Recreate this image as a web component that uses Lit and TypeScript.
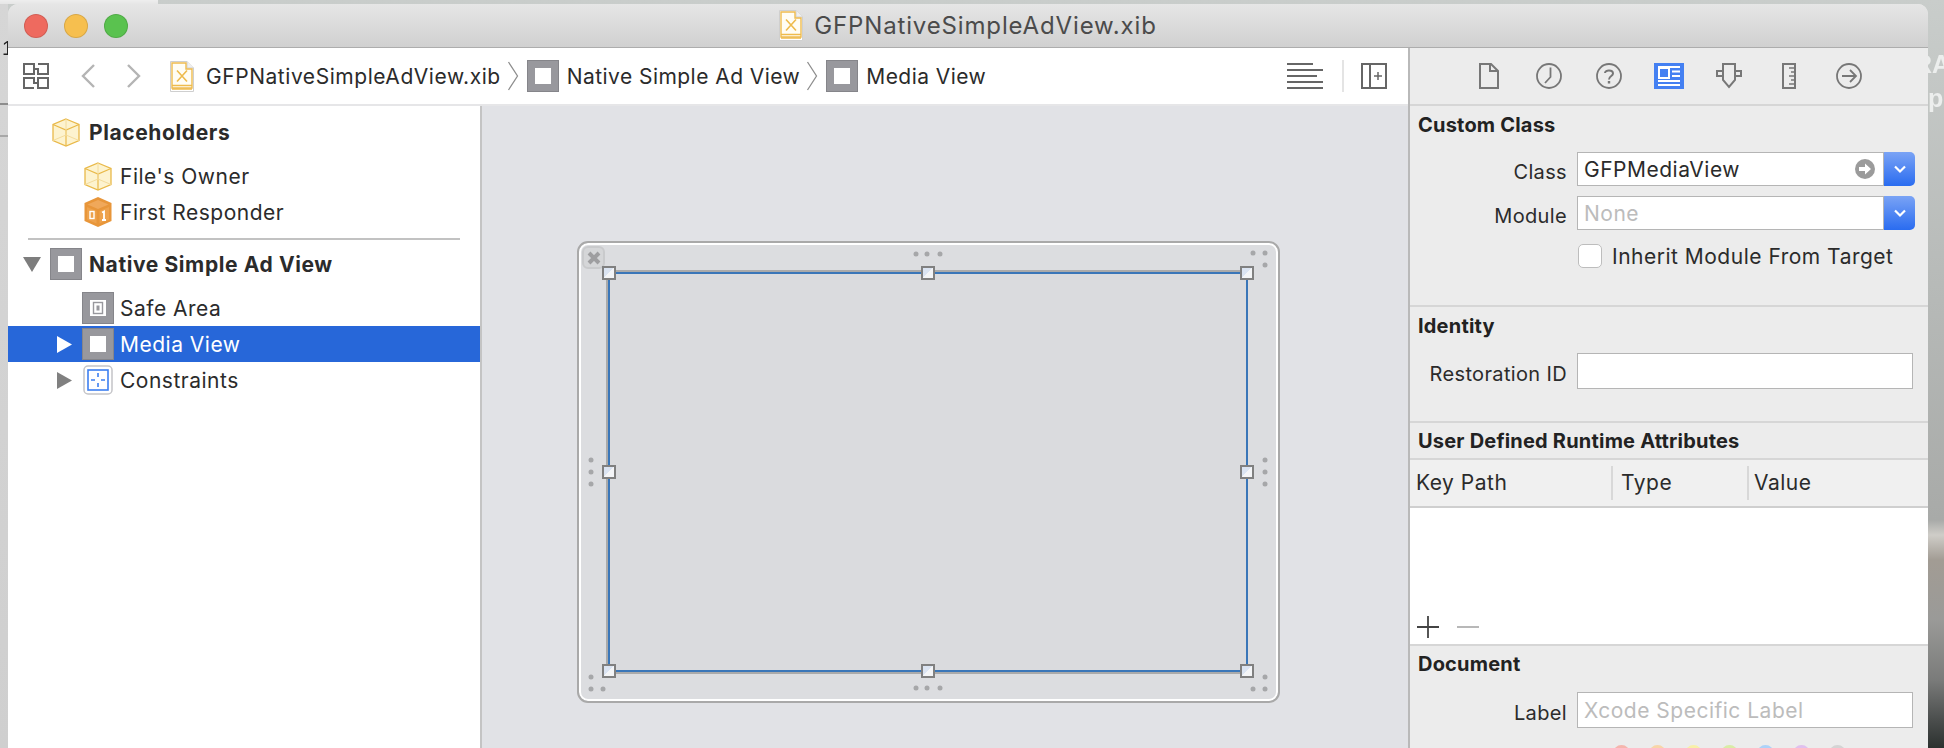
import { LitElement, html, svg, css } from 'lit';
import { customElement } from 'lit/decorators.js';

// small icon helpers, all drawn at the size seen in the screenshot
const cube = (w = 28, h = 29) => svg`
  <svg width=${w} height=${h} viewBox="0 0 28 29">
    <path d="M14 1 27 6.500V22.500L14 28 1 22.500V6.500Z" fill="#fdf3cf" stroke="#e9b949" stroke-width="1.300"/>
    <path d="M1 6.500 14 12 27 6.500M14 12V28" fill="none" stroke="#e9b949" stroke-width="1.200"/>
    <path d="M14 1V17M1 22.500 14 17 27 22.500" fill="none" stroke="#f4dc9c" stroke-width="1"/>
  </svg>`;

const responder = () => svg`
  <svg width="28" height="32" viewBox="0 0 28 32">
    <path d="M14 1 27.500 7V25L14 31 .5 25V7Z" fill="#e8963a"/>
    <path d="M14 4 24.500 8.500 14 13 3.500 8.500Z" fill="#f0a85a"/>
    <path d="M3 11 12.500 15V27.500L3 23.500ZM15.500 15 25 11V23.500L15.500 27.500Z" fill="#eea24c"/>
    <rect x="6" y="15.500" width="4" height="7" fill="none" stroke="#fff" stroke-width="1.400"/>
    <path d="M18 16.500 20 15.500V24M18 24H22" fill="none" stroke="#fff" stroke-width="1.800"/>
  </svg>`;

const viewBox = (inner: 'plain' | 'safe' = 'plain') => svg`
  <svg width="32" height="32" viewBox="0 0 32 32">
    <rect width="32" height="32" fill="#98989d"/>
    <rect x=".5" y=".5" width="31" height="31" fill="none" stroke="#85858a"/>
    <rect x="8" y="8" width="16" height="16" fill="#fff"/>
    ${inner === 'safe'
      ? svg`<rect x="11.500" y="10.500" width="9" height="11" fill="#fff" stroke="#98989d" stroke-width="1.400"/>
            <rect x="14.500" y="13.500" width="3" height="5" fill="#98989d"/>`
      : ''}
  </svg>`;

const constraints = () => svg`
  <svg width="30" height="30" viewBox="0 0 30 30">
    <rect x="1" y="1" width="28" height="28" rx="4" fill="#fff" stroke="#c4c4c8" stroke-width="1.500"/>
    <rect x="5" y="5" width="20" height="20" fill="#fff" stroke="#3d7ff0" stroke-width="1.600"/>
    <path d="M15 8V12M15 18V22M8 15H12M18 15H22" stroke="#3d7ff0" stroke-width="1.600"/>
  </svg>`;

const xib = (w = 24, h = 31) => svg`
  <svg width=${w} height=${h} viewBox="0 0 24 31">
    <path d="M.5.5H17L23.500 7V30.500H.5Z" fill="#fff" stroke="#cfcfcf"/>
    <path d="M17 .5V7H23.500" fill="#efefef" stroke="#cfcfcf"/>
    <path d="M2 2H16V8H22V27H2Z" fill="#fffdf4" stroke="#eebb4d" stroke-width="1.400"/>
    <path d="M2 24.500H22M2 28H22" stroke="#eebb4d" stroke-width="1.300"/>
    <path d="M7 9.500 17 20.500M17 9.500 7 20.500" stroke="#eebb4d" stroke-width="1.600"/>
  </svg>`;

const grid = () => svg`
  <svg width="26" height="26" viewBox="0 0 26 26" fill="none" stroke="#666" stroke-width="2">
    <rect x="1" y="1" width="10" height="10"/><path d="M15 1H25V11H15V6H11"/>
    <path d="M11 25H1V15H11V20H15"/><rect x="15" y="15" width="10" height="10"/>
  </svg>`;

const crumbSep = () => svg`
  <svg width="12" height="30" viewBox="0 0 12 30"><path d="M1.500 1 10.500 15 1.500 29" fill="none" stroke="#8e8e8e" stroke-width="1.300"/></svg>`;

const tri = (dir: 'down' | 'right', color: string) => dir === 'down'
  ? svg`<svg width="18" height="15" viewBox="0 0 18 15"><path d="M0 0H18L9 15Z" fill=${color}/></svg>`
  : svg`<svg width="15" height="17" viewBox="0 0 15 17"><path d="M0 0 15 8.500 0 17Z" fill=${color}/></svg>`;

const chooser = () => html`<span class="stepper"><svg width="14" height="9" viewBox="0 0 14 9"><path d="M2 1.500 7 6.500 12 1.500" fill="none" stroke="#fff" stroke-width="2.200"/></svg></span>`;

const inspectorIcons = [
  svg`<svg width="20" height="26" viewBox="0 0 20 26" fill="none" stroke="#777" stroke-width="2"><path d="M1 1H12L19 8V25H1Z"/><path d="M11 1V8H19"/></svg>`,
  svg`<svg width="26" height="26" viewBox="0 0 26 26" fill="none" stroke="#777" stroke-width="1.800"><circle cx="13" cy="13" r="12"/><path d="M14.500 4.500V14L9 20"/></svg>`,
  svg`<svg width="26" height="26" viewBox="0 0 26 26" fill="none" stroke="#777" stroke-width="1.800"><circle cx="13" cy="13" r="12"/><path d="M9 10C9 6.500 17 6.500 17 10.500 17 13 13 13 13 16.500" stroke-width="2"/><path d="M13 18V20.500" stroke-width="2.400"/></svg>`,
  svg`<svg width="30" height="26" viewBox="0 0 30 26"><rect width="30" height="26" fill="#4480f2"/><path d="M4 4H26M18 8.500H26M18 13H26M4 18H26M4 22H26" stroke="#fff" stroke-width="1.800"/><rect x="5" y="5" width="10" height="10" fill="none" stroke="#fff" stroke-width="2"/></svg>`,
  svg`<svg width="26" height="26" viewBox="0 0 26 26" fill="none" stroke="#777" stroke-width="2"><path d="M7 1H19V17L13 24 7 17Z"/><path d="M7 8H1V13H7M19 8H25V13H19"/></svg>`,
  svg`<svg width="14" height="26" viewBox="0 0 14 26" fill="none" stroke="#777" stroke-width="2"><rect x="1" y="1" width="12" height="24"/><path d="M7 5H13M9 9H13M7 13H13M9 17H13M7 21H13" stroke-width="1.600"/></svg>`,
  svg`<svg width="26" height="26" viewBox="0 0 26 26" fill="none" stroke="#777" stroke-width="1.800"><circle cx="13" cy="13" r="12"/><path d="M6 13H20M14 7 20 13 14 19"/></svg>`,
];

interface TreeRow {
  label: string;
  icon: unknown;
  level: 0 | 1;
  bold?: boolean;
  arrow?: 'down' | 'right';
  selected?: boolean;
}

const firstGroup: TreeRow[] = [
  { label: 'Placeholders', icon: cube(), level: 0, bold: true },
  { label: "File's Owner", icon: cube(), level: 1 },
  { label: 'First Responder', icon: responder(), level: 1 },
];
const secondGroup: TreeRow[] = [
  { label: 'Native Simple Ad View', icon: viewBox(), level: 0, bold: true, arrow: 'down' },
  { label: 'Safe Area', icon: viewBox('safe'), level: 1 },
  { label: 'Media View', icon: viewBox(), level: 1, arrow: 'right', selected: true },
  { label: 'Constraints', icon: constraints(), level: 1, arrow: 'right' },
];

// scene coordinates, relative to the scene's padding box
const hx = [30, 349, 668];
const hy = [30, 229, 428];
const handles = hy.flatMap((y, r) => hx.filter((_, c) => !(r === 1 && c === 1)).map(x => [x, y]));
const dots = [
  [337, 11], [348, 11], [361, 11], [337, 445], [348, 445], [361, 445],
  [12, 217], [12, 229], [12, 241], [686, 217], [686, 229], [686, 241],
  [674, 10], [686, 10], [686, 22], [686, 434], [674, 446], [686, 446],
  [12, 434], [12, 446], [24, 446],
];
const labelColors = ['#f5b5ad', '#f8d5a8', '#f8f0a8', '#d9eca6', '#add2f8', '#e0c0ee', '#d4d4d4'];

@customElement('app-root')
export class AppRoot extends LitElement {
  static styles = css`
    :host {
      display: block;
      width: 1944px;
      height: 748px;
      overflow: hidden;
      font-family: Inter, 'Liberation Sans', sans-serif;
      color: #2b2b2b;
    }
    .desk {
      position: relative;
      width: 1944px;
      height: 748px;
      overflow: hidden;
      padding: 4px 16px 0 8px;
      box-sizing: border-box;
      background:
        linear-gradient(#8d8d8d, #8d8d8d) 0 103px / 8px 2px no-repeat,
        linear-gradient(#a8a8a8, #a8a8a8) 0 135px / 8px 2px no-repeat,
        linear-gradient(#eeeeee, #e6e6e6) 0 0 / 158px 4px no-repeat,
        linear-gradient(#d6d6d6, #cfcfcf) 0 0 / 8px 748px no-repeat,
        linear-gradient(180deg, #c9cdcb 0, #b6b9b7 300px, #a8aaa8 520px, #cfcdc8 535px, #a29c94 560px, #9a9a98 620px, #7a7b7a 680px, #4b4e4d 720px, #2c312f 748px);
    }
    .peek {
      position: absolute;
      left: 1914px;
      font: 700 25px 'Liberation Sans', sans-serif;
      color: #eceeed;
      filter: blur(0.7px);
    }
    .peek.one { top: 50px; }
    .peek.two { top: 84px; }
    .peek.num { left: 2px; top: 37px; color: #222; font-size: 20px; font-weight: 400; }
    .window {
      position: relative;
      width: 1920px;
      height: 744px;
      display: flex;
      flex-direction: column;
      border-radius: 10px 10px 0 0;
      overflow: hidden;
      background: #ececec;
    }
    .titlebar {
      height: 43px;
      flex: none;
      display: flex;
      align-items: center;
      justify-content: center;
      gap: 11px;
      position: relative;
      border-bottom: 1px solid #adadad;
      background: linear-gradient(#e6e6e6, #d0d0d0);
      font-size: 24px;
      letter-spacing: 0.85px;
      color: #4b4b4b;
    }
    .traffic { position: absolute; left: 16px; top: 10px; display: flex; gap: 16px; }
    .light { width: 22px; height: 22px; border-radius: 50%; border: 1px solid rgba(0,0,0,.12); }
    .red { background: #ee6a5f; }
    .yellow { background: #f6bf4f; }
    .green { background: #5ac24f; }
    .main { flex: 1; display: flex; min-height: 0; }
    .left { width: 1400px; flex: none; display: flex; flex-direction: column; }
    .toolbar {
      height: 56px;
      flex: none;
      background: #fff;
      display: flex;
      align-items: center;
      border-bottom: 2px solid #e6e6e8;
      font-size: 21px;
      letter-spacing: 0.55px;
      padding-right: 21px;
    }
    .nav-btns { display: flex; align-items: center; padding-left: 15px; }
    .chev { display: block; }
    .crumbs { display: flex; align-items: center; margin-left: 29px; flex: 1; min-width: 0; }
    .crumbs .gap { margin: 0 8px 0 6px; display: flex; }
    .crumbs .txt { margin-left: 8px; letter-spacing: 0.45px; }
    .crumbs .file { margin-left: 12px; }
    .tools { display: flex; align-items: center; flex: none; }
    .vsep { width: 2px; height: 32px; background: #e4e4e4; margin: 0 17px 0 19px; }
    .content { flex: 1; display: flex; min-height: 0; }
    .tree {
      width: 472px;
      flex: none;
      background: #fff;
      border-right: 2px solid #c4c4c4;
      padding-top: 8px;
      font-size: 21px;
      letter-spacing: 0.5px;
    }
    .row { height: 36px; display: flex; align-items: center; }
    .row.l0 { padding-left: 15px; }
    .row.l1 { padding-left: 49px; }
    .row.spaced { margin-top: 8px; }
    .row.bold { font-weight: 700; letter-spacing: 0.6px; }
    .row.sel { background: #2767d9; color: #fff; }
    .row.l0 .arrow { width: 27px; }
    .row.l1 .arrow { width: 25px; }
    .arrow { display: flex; align-items: center; flex: none; }
    .row .ico { width: 32px; height: 32px; display: flex; align-items: center; justify-content: center; flex: none; margin-right: 7px; }
    .row.l1 .ico { margin-right: 6px; }
    .tree hr { border: 0; height: 2px; background: #c2c2c2; margin: 8px 20px 6px 20px; }
    .canvas { flex: 1; position: relative; background: #e1e2e6; }
    .scene {
      position: absolute;
      left: 95px;
      top: 135px;
      width: 699px;
      height: 458px;
      border: 2px solid #a9a9a9;
      border-radius: 11px;
      background: #dcdde0;
      box-shadow: inset 0 0 0 2px #fff;
    }
    .frame {
      position: absolute;
      left: 29px;
      top: 29px;
      width: 636px;
      height: 396px;
      border: 2px solid #3a76b8;
      background: #dadbde;
      box-shadow: 0 -2px 0 #aaa, -2px 0 0 #aaa, 0 2px 0 #aaa;
    }
    .handle {
      position: absolute;
      width: 14px;
      height: 14px;
      box-sizing: border-box;
      transform: translate(-7px, -7px);
      border: 2px solid #808080;
      background: linear-gradient(135deg, #dbe4f2 45%, #f4f5f7 46%);
    }
    .dot {
      position: absolute;
      width: 5px;
      height: 5px;
      transform: translate(-2.500px, -2.500px);
      border-radius: 50%;
      background: #a6a7a9;
    }
    .close {
      position: absolute;
      left: 3px;
      top: 3px;
      width: 23px;
      height: 23px;
      box-sizing: border-box;
      border: 2px solid #c9cacc;
      border-radius: 6px;
      background: #d5d6d8;
      display: flex;
      align-items: center;
      justify-content: center;
    }
    .inspector {
      flex: 1;
      border-left: 2px solid #b9b9b9;
      background: #ececec;
      font-size: 21px;
      letter-spacing: 0.5px;
      display: flex;
      flex-direction: column;
    }
    .iconbar {
      height: 56px;
      flex: none;
      display: flex;
      align-items: center;
      padding-left: 49px;
      border-bottom: 2px solid #d6d6d6;
    }
    .iconbar span { width: 60px; display: flex; justify-content: center; }
    .sec { flex: none; box-sizing: border-box; border-bottom: 2px solid #d6d6d6; }
    .sec h2, .doc h2 {
      margin: 0;
      height: 22px;
      line-height: 22px;
      font-size: 20px;
      letter-spacing: 0.2px;
      font-weight: 700;
      padding-left: 8px;
      color: #222;
    }
    .sec.custom { height: 201px; padding-top: 8px; }
    .sec.identity { height: 116px; padding-top: 8px; }
    .sec.udra { height: 37px; padding-top: 7px; }
    .form { display: flex; align-items: center; height: 34px; }
    .form .label {
      width: 157px;
      text-align: right;
      margin-right: 10px;
      flex: none;
      padding-top: 5px;
      font-size: 20px;
      letter-spacing: 0.35px;
    }
    .field {
      box-sizing: border-box;
      height: 100%;
      background: #fff;
      border: 1.500px solid #b5b5b5;
      display: flex;
      align-items: center;
      padding-left: 6px;
    }
    .field.wide { width: 336px; }
    .combo { display: flex; width: 338px; height: 100%; }
    .combo .field { flex: 1; justify-content: space-between; padding-right: 8px; }
    .muted { color: #bcbcbc; }
    .stepper {
      width: 31px;
      flex: none;
      display: flex;
      align-items: center;
      justify-content: center;
      background: linear-gradient(#7aa3f5, #2a6cf0);
      border-radius: 0 5px 5px 0;
    }
    .check { display: flex; align-items: center; height: 24px; margin: 14px 0 0 168px; gap: 10px; }
    .box { width: 24px; height: 24px; box-sizing: border-box; border: 1.500px solid #bdbdbd; border-radius: 5px; background: #fff; }
    .table-head {
      height: 46px;
      flex: none;
      display: flex;
      align-items: center;
      background: #f0f0f0;
      border-bottom: 2px solid #cfcfcf;
    }
    .col { height: 34px; line-height: 34px; box-sizing: border-box; }
    .col + .col { border-left: 2px solid #d8d8d8; padding-left: 8px; }
    .col.key { width: 201px; padding-left: 6px; }
    .col.type { width: 136px; }
    .col.value { padding-left: 5px; }
    .table-body {
      height: 130px;
      flex: none;
      background: #fff;
      border-bottom: 2px solid #d6d6d6;
      display: flex;
      align-items: flex-end;
      gap: 18px;
      padding: 0 0 6px 7px;
    }
    .doc { flex: 1; padding-top: 6px; }
    .doc h2 { height: 24px; line-height: 24px; }
    .doc .form { height: 36px; margin-top: 16px; }
    .swatches { display: flex; gap: 19px; margin: 17px 0 0 203px; }
    .swatches i { width: 17px; height: 17px; border-radius: 50%; display: block; }
  `;

  private renderRow(r: TreeRow, spaced = false) {
    const cls = `row l${r.level}${r.bold ? ' bold' : ''}${r.selected ? ' sel' : ''}${spaced ? ' spaced' : ''}`;
    return html`
      <div class=${cls}>
        <span class="arrow">${r.arrow ? tri(r.arrow, r.selected ? '#fff' : r.arrow === 'down' ? '#7d7d7d' : '#808080') : ''}</span>
        <span class="ico">${r.icon}</span>
        <span>${r.label}</span>
      </div>
    `;
  }

  render() {
    return html`
      <div class="desk">
        <span class="peek one">RA</span>
        <span class="peek two">xp</span>
        <span class="peek num">1</span>
        <div class="window">
          <div class="titlebar">
            <div class="traffic">
              <span class="light red"></span><span class="light yellow"></span><span class="light green"></span>
            </div>
            ${xib()}
            <span>GFPNativeSimpleAdView.xib</span>
          </div>
          <div class="main">
            <div class="left">
              <div class="toolbar">
                <div class="nav-btns">
                  ${grid()}
                  <svg class="chev" style="margin-left:32px" width="14" height="24" viewBox="0 0 14 24"><path d="M13 1 2 12 13 23" fill="none" stroke="#b4b4b4" stroke-width="2.400"/></svg>
                  <svg class="chev" style="margin-left:32px" width="14" height="24" viewBox="0 0 14 24"><path d="M1 1 12 12 1 23" fill="none" stroke="#b4b4b4" stroke-width="2.400"/></svg>
                </div>
                <div class="crumbs">
                  ${xib()}
                  <span class="file">GFPNativeSimpleAdView.xib</span>
                  <span class="gap">${crumbSep()}</span>
                  ${viewBox()}
                  <span class="txt">Native Simple Ad View</span>
                  <span class="gap">${crumbSep()}</span>
                  ${viewBox()}
                  <span class="txt">Media View</span>
                </div>
                <div class="tools">
                  <svg width="36" height="26" viewBox="0 0 36 26"><path d="M0 1H26M0 7H36M0 13H30M0 19H36M0 25H36" stroke="#666" stroke-width="1.800"/></svg>
                  <span class="vsep"></span>
                  <svg width="26" height="26" viewBox="0 0 26 26" fill="none" stroke="#666" stroke-width="2"><rect x="1" y="1" width="24" height="24"/><path d="M9 1V25"/><path d="M17 9V17M13 13H21" stroke-width="1.500"/></svg>
                </div>
              </div>
              <div class="content">
                <div class="tree">
                  ${firstGroup.map((r, i) => this.renderRow(r, i === 1))}
                  <hr />
                  ${secondGroup.map((r, i) => this.renderRow(r, i === 1))}
                </div>
                <div class="canvas">
                  <div class="scene">
                    ${dots.map(d => html`<span class="dot" style="left:${d[0]}px;top:${d[1]}px"></span>`)}
                    <div class="close">
                      <svg width="14" height="14" viewBox="0 0 14 14"><path d="M2 2 12 12M12 2 2 12" stroke="#9e9ea0" stroke-width="4"/></svg>
                    </div>
                    <div class="frame"></div>
                    ${handles.map(h => html`<span class="handle" style="left:${h[0]}px;top:${h[1]}px"></span>`)}
                  </div>
                </div>
              </div>
            </div>
            <div class="inspector">
              <div class="iconbar">${inspectorIcons.map(i => html`<span>${i}</span>`)}</div>
              <div class="sec custom">
                <h2>Custom Class</h2>
                <div class="form" style="margin-top:16px">
                  <span class="label">Class</span>
                  <div class="combo">
                    <div class="field">
                      <span>GFPMediaView</span>
                      <svg width="20" height="20" viewBox="0 0 20 20"><circle cx="10" cy="10" r="10" fill="#9b9b9b"/><path d="M4 8H10V4.500L16 10 10 15.500V12H4Z" fill="#fff"/></svg>
                    </div>
                    ${chooser()}
                  </div>
                </div>
                <div class="form" style="margin-top:10px">
                  <span class="label">Module</span>
                  <div class="combo">
                    <div class="field muted">None</div>
                    ${chooser()}
                  </div>
                </div>
                <div class="check"><span class="box"></span><span>Inherit Module From Target</span></div>
              </div>
              <div class="sec identity">
                <h2>Identity</h2>
                <div class="form" style="margin-top:16px;height:36px">
                  <span class="label">Restoration ID</span>
                  <div class="field wide"></div>
                </div>
              </div>
              <div class="sec udra">
                <h2>User Defined Runtime Attributes</h2>
              </div>
              <div class="table-head">
                <div class="col key">Key Path</div>
                <div class="col type">Type</div>
                <div class="col value">Value</div>
              </div>
              <div class="table-body">
                <svg width="22" height="22" viewBox="0 0 22 22"><path d="M0 11H22M11 0V22" stroke="#444" stroke-width="1.800"/></svg>
                <svg style="margin-bottom:10px" width="22" height="2" viewBox="0 0 22 2"><path d="M0 1H22" stroke="#b8b8b8" stroke-width="2"/></svg>
              </div>
              <div class="doc">
                <h2>Document</h2>
                <div class="form">
                  <span class="label">Label</span>
                  <div class="field wide muted">Xcode Specific Label</div>
                </div>
                <div class="swatches">${labelColors.map(c => html`<i style="background:${c}"></i>`)}</div>
              </div>
            </div>
          </div>
        </div>
      </div>
    `;
  }
}
